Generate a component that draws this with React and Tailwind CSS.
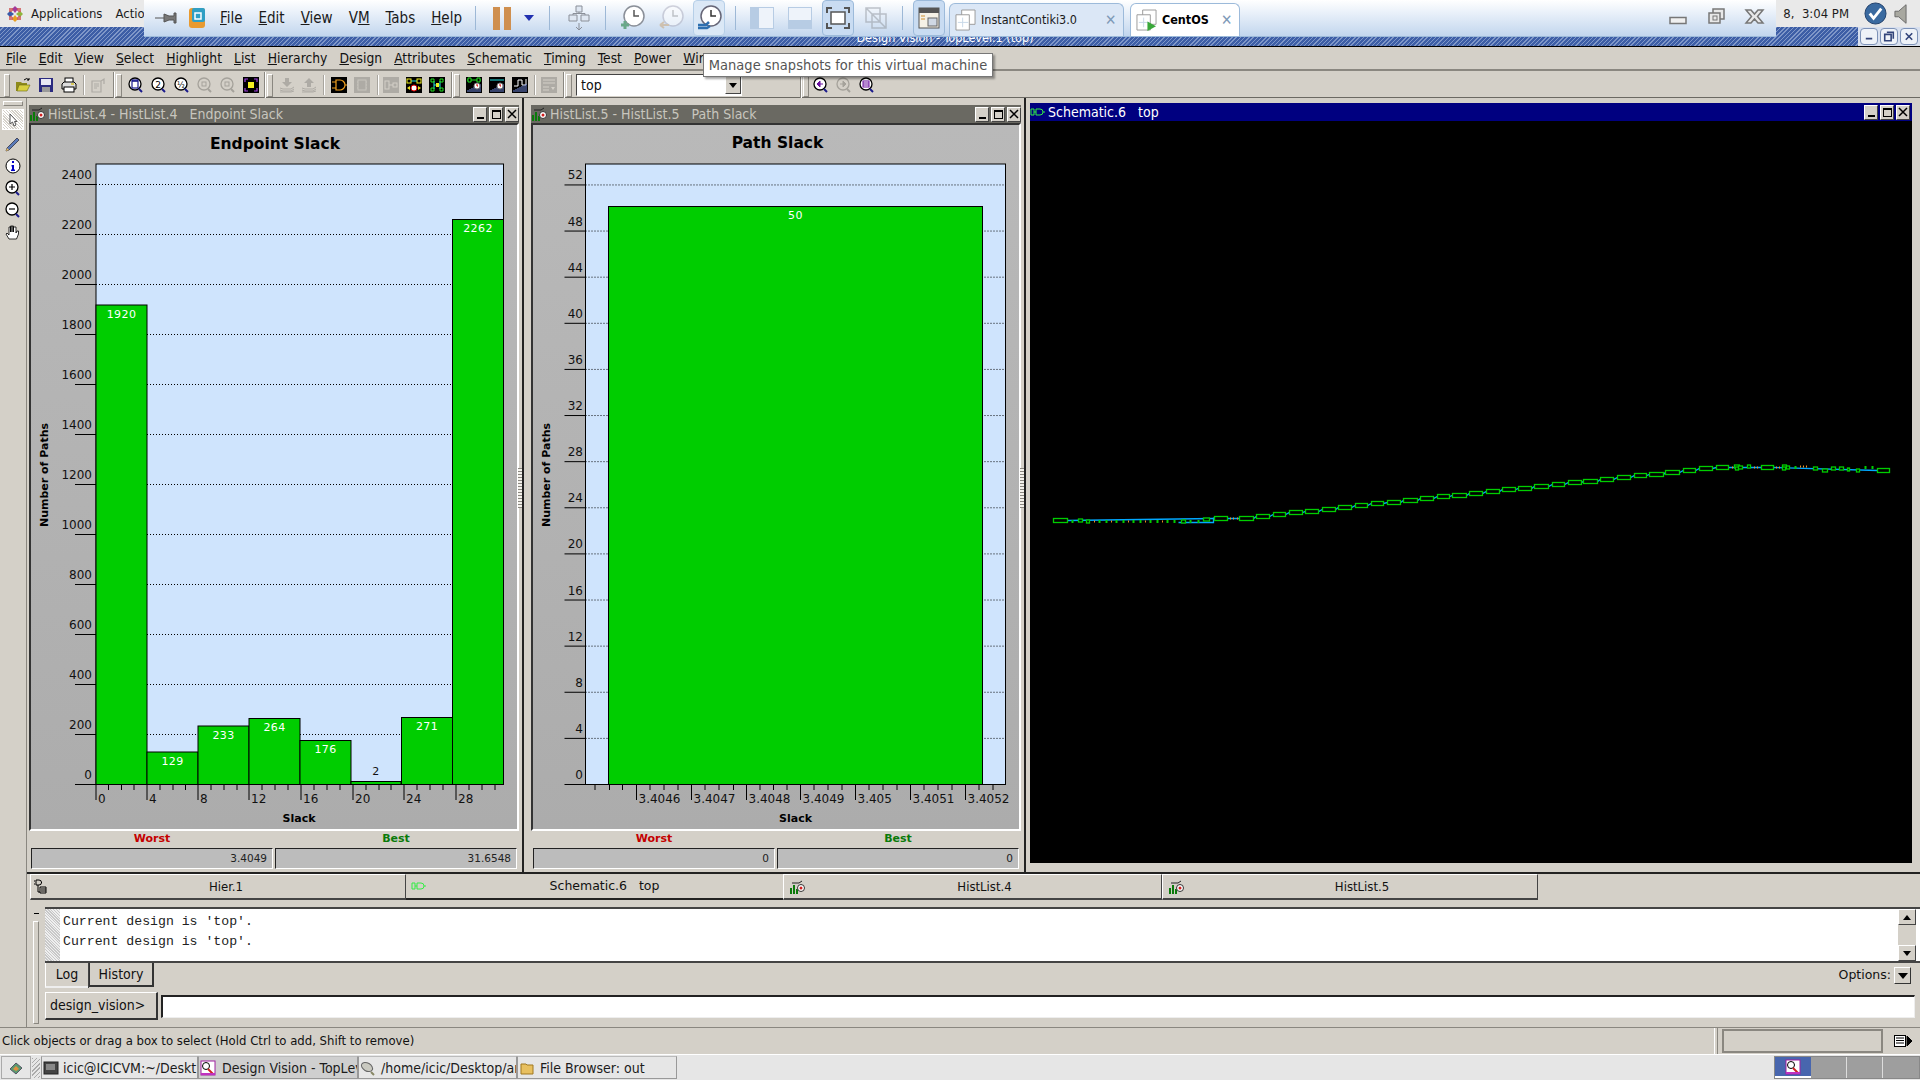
import React from "react";

const CHART_FONT = "'DejaVu Sans', sans-serif";

const menus = ["File", "Edit", "View", "Select", "Highlight", "List", "Hierarchy", "Design", "Attributes", "Schematic", "Timing", "Test", "Power", "Wir"];

const Ico = ({ children, className = "" }) => (
  <svg viewBox="0 0 16 16" className={`w-4 h-4 shrink-0 ${className}`}>{children}</svg>
);

const Grip = () => (
  <div className="w-[6px] h-[23px] shrink-0 border border-[#8a8780] border-t-white border-l-white bg-[#d4d0c8] mx-[1px]" />
);

const Sep = () => <div className="w-[2px] h-[20px] shrink-0 bg-[#a8a59e] border-r border-white" />;

const Band = () => <div className="w-[2px] h-[26px] shrink-0 bg-[#8a8780] border-r border-white" />;

const Lens = ({ children, muted }) => (
  <Ico>
    <circle cx="7" cy="7" r="6" fill={muted ? "none" : "#fff"} stroke={muted ? "#a5a29b" : "#000"} strokeWidth="1.3" />
    <path d="M11 12l3 3" stroke={muted ? "#a5a29b" : "#1a1a8c"} strokeWidth="2" />
    {children}
  </Ico>
);

const BlackBox = ({ children }) => (
  <Ico>
    <rect width="16" height="16" fill="#000" />
    {children}
  </Ico>
);

const GreyBox = ({ children }) => (
  <Ico>
    <rect width="16" height="16" fill="#aeaba5" />
    {children}
  </Ico>
);

const Bars = ({ color = "#6f86d8" }) => (
  <path d="M2 15v-2M4 15v-3M6 15v-4M8 15v-5M10 15v-6M12 15v-7M14 15v-8" stroke={color} strokeWidth="1" />
);

const Clock = () => (
  <g>
    <circle cx="11" cy="9" r="3" fill="#fff" stroke="#777" />
    <path d="M11 7v2h1" stroke="#d00" strokeWidth="1" fill="none" />
  </g>
);

function AppToolbar() {
  return (
    <div className="h-[27px] shrink-0 flex items-center pl-[3px] pt-[2px] bg-[#d4d0c8] border-b border-[#6b6963]">
      <Grip />
      <div className="flex items-center gap-[7px] ml-[4px]">
        <Ico>
          <path d="M1 5h5l1 1h5v2H5L3 14H1z" fill="#8d8a1c" />
          <path d="M4 8h11l-3 6H2z" fill="#d8d040" stroke="#6a6812" strokeWidth=".6" />
          <path d="M9 3q3-3 5 0M14 1v2h-2" stroke="#000" fill="none" />
        </Ico>
        <Ico>
          <rect x="1" y="1" width="14" height="14" fill="#2b2b80" />
          <rect x="3" y="2" width="10" height="6" fill="#e8e8f4" />
          <rect x="4" y="10" width="8" height="5" fill="#9a9a9a" />
        </Ico>
        <Ico>
          <rect x="4" y="1" width="8" height="5" fill="#fff" stroke="#000" />
          <path d="M1 7l2-2h10l2 2v5H1z" fill="#ddd" stroke="#000" />
          <rect x="3" y="10" width="10" height="5" fill="#fff" stroke="#000" />
          <path d="M10 7h3" stroke="#d8c020" strokeWidth="1.4" />
        </Ico>
      </div>
      <div className="ml-[6px]"><Sep /></div>
      <div className="ml-[5px]">
        <Ico>
          <path d="M2 4h9v11H2zM4 7h5M4 9h5M4 11h3M11 4l3-2v5" stroke="#aeaba5" fill="none" strokeWidth="1.2" />
        </Ico>
      </div>
      <div className="ml-[7px]"><Band /></div>
      <Grip />
      <div className="flex items-center gap-[7px] ml-[5px]">
        <Lens><rect x="4" y="3" width="6" height="8" fill="none" stroke="#1a1a8c" strokeWidth="1.2" /><path d="M4 4h6" stroke="#1a1a8c" strokeWidth="1.6" /></Lens>
        <Lens><text x="7" y="10.5" fontSize="9" textAnchor="middle" fontFamily={CHART_FONT}>2</text></Lens>
        <Lens><text x="7" y="10.5" fontSize="8" textAnchor="middle" fontFamily={CHART_FONT}>½</text></Lens>
        <Lens muted><rect x="5" y="5" width="4" height="4" fill="none" stroke="#a5a29b" /></Lens>
        <Lens muted><rect x="5" y="5" width="4" height="4" fill="none" stroke="#a5a29b" /></Lens>
        <BlackBox>
          <rect x="5" y="5" width="6" height="6" fill="#f4f020" />
          <path d="M2 5V2h3M11 2h3v3M14 11v3h-3M5 14H2v-3" stroke="#a040e0" fill="none" strokeWidth="1.2" />
        </BlackBox>
      </div>
      <div className="ml-[5px]"><Band /></div>
      <Grip />
      <div className="flex items-center gap-[6px] ml-[5px]">
        <Ico><path d="M6 1h4v4h3l-5 5-5-5h3z" fill="#aeaba5" /><path d="M1 11l3 1h8l3-2M1 13l3 1h8l3-2M1 15h11l3-1" stroke="#aeaba5" fill="none" /></Ico>
        <Ico><path d="M8 1l5 5h-3v4H6V6H3z" fill="#aeaba5" /><path d="M1 11l3 1h8l3-2M1 13l3 1h8l3-2M1 15h11l3-1" stroke="#aeaba5" fill="none" /></Ico>
      </div>
      <div className="ml-[6px]"><Sep /></div>
      <div className="flex items-center gap-[7px] ml-[6px]">
        <BlackBox><path d="M1 5h4M1 11h4M5 3h4a5 5 0 0 1 0 10H5zM14 8h2" stroke="#f0a020" fill="none" strokeWidth="1.2" /></BlackBox>
        <GreyBox><rect x="4" y="3" width="8" height="10" fill="none" stroke="#c8c5be" /><path d="M3 5h1M3 8h1M3 11h1M12 5h1M12 8h1M12 11h1" stroke="#c8c5be" /></GreyBox>
      </div>
      <div className="ml-[7px]"><Sep /></div>
      <div className="flex items-center gap-[7px] ml-[4px]">
        <GreyBox><rect x="2" y="4" width="4" height="8" fill="none" stroke="#d4d0c8" /><rect x="10" y="6" width="4" height="4" fill="none" stroke="#d4d0c8" /><path d="M6 8h4" stroke="#d4d0c8" /></GreyBox>
        <BlackBox>
          <path d="M1 4h14" stroke="#20e0e0" /><rect x="1" y="2" width="4" height="4" fill="#000" stroke="#f0f020" /><rect x="11" y="2" width="4" height="4" fill="#000" stroke="#f0f020" />
          <circle cx="8" cy="11" r="3" fill="#fff" stroke="#d00" /><path d="M1 11l3-2v4zM15 11l-3-2v4z" fill="#f0e020" />
        </BlackBox>
        <BlackBox>
          <path d="M5 4v8M5 8h6M11 4v8" stroke="#20e0e0" /><path d="M2 2h3v3H2zM2 11h3v3H2zM11 2h3v3h-3zM11 11h3v3h-3z" fill="none" stroke="#20e020" /><rect x="7" y="6" width="3" height="4" fill="#f0f020" />
        </BlackBox>
      </div>
      <div className="ml-[6px]"><Band /></div>
      <Grip />
      <div className="flex items-center gap-[7px] ml-[5px]">
        <BlackBox><path d="M1 3h14" stroke="#20e020" /><path d="M2 1h3v4H2zM11 1h3v4h-3z" fill="#000" stroke="#20e020" /><Bars /><Clock /></BlackBox>
        <BlackBox><path d="M1 3h14" stroke="#20e0e0" /><Bars /><Clock /></BlackBox>
        <BlackBox><path d="M2 9h4V3h4v5h4V2" stroke="#fff" fill="none" /><Bars /></BlackBox>
      </div>
      <div className="ml-[6px]"><Sep /></div>
      <div className="ml-[5px]">
        <GreyBox><path d="M2 3h12M2 6h12M2 10h6M2 13h6" stroke="#d4d0c8" /><path d="M10 10h4l-2 3z" fill="#d4d0c8" /></GreyBox>
      </div>
      <div className="ml-[6px]"><Band /></div>
      <Grip />
      <div className="ml-[3px] w-[166px] h-[22px] bg-white border border-[#444] border-r-white border-b-white flex items-center pl-1 text-[14px]">
        <span className="flex-1">top</span>
        <span className="w-[16px] h-[18px] bg-[#d4d0c8] border border-white border-r-[#444] border-b-[#444] flex items-center justify-center">
          <span className="w-0 h-0 border-x-[4px] border-x-transparent border-t-[5px] border-t-black" />
        </span>
      </div>
      <div className="ml-[58px]"><Band /></div>
      <Grip />
      <div className="flex items-center gap-[7px] ml-[3px]">
        <Lens><path d="M10 7H6M7 4L4 7l3 3z" stroke="#6a10a0" fill="#6a10a0" /></Lens>
        <Lens muted><path d="M4 7h4M7 4l3 3-3 3z" stroke="#a5a29b" fill="#a5a29b" /></Lens>
        <Lens><rect x="4" y="4" width="6" height="6" fill="none" stroke="#6a10a0" /><path d="M4 6h6M4 8h6" stroke="#6a10a0" /></Lens>
      </div>
    </div>
  );
}

function TitleButtons() {
  const cls = "w-[14px] h-[15px] bg-[#d4d0c8] border border-white border-r-[#444] border-b-[#444] flex items-center justify-center";
  return (
    <div className="flex gap-[2px]">
      <div className={cls}><span className="mt-[7px] w-[7px] h-[2px] bg-black" /></div>
      <div className={cls}><span className="w-[9px] h-[9px] border border-black border-t-2" /></div>
      <div className={cls}>
        <svg viewBox="0 0 10 10" className="w-[10px] h-[10px]"><path d="M1 1l8 8M9 1l-8 8" stroke="#000" strokeWidth="1.5" /></svg>
      </div>
    </div>
  );
}

const HistIcon = () => (
  <Ico>
    <path d="M1 15V9h2v6zM4 15V6h2v9zM7 15v-5h2v5z" fill="#0a7a0a" />
    <path d="M3 4h7l3-2" stroke="#222" fill="none" />
    <circle cx="12" cy="9" r="3.5" fill="#fff" stroke="#333" />
    <circle cx="12" cy="9" r="1.5" fill="#d02020" />
  </Ico>
);

const SchemIcon = () => (
  <svg viewBox="0 0 16 10" className="w-4 h-[10px] shrink-0">
    <path d="M1 2h3v6H1zM4 5h2M6 2h4a3 3 0 0 1 0 6H6zM13 5h2" fill="none" stroke="#33ee44" />
  </svg>
);

// histogram plot, drawn in page coordinates so the numbers read off the reference directly
function Plot({ box, title, titleX, titleY, plot, yTicks, xMajor, xMinor, xLabels, slackX, bars, yLabelX, pathsX }) {
  const base = 784.5;
  const [x0, x1] = plot;
  return (
    <svg
      viewBox={`${box[0]} 125 ${box[1] - box[0]} 704`}
      className="block shrink-0"
      style={{ width: box[1] - box[0], height: 704 }}
    >
      <defs>
        <linearGradient id={`g${box[0]}`} x1="0" y1="0" x2="0" y2="1">
          <stop offset="0" stopColor="#b9b9b9" />
          <stop offset="1" stopColor="#acacac" />
        </linearGradient>
      </defs>
      <rect x={box[0]} y="125" width={box[1] - box[0]} height="704" fill={`url(#g${box[0]})`} />
      <text x={titleX} y={titleY} textAnchor="middle" fontFamily={CHART_FONT} fontWeight="700" fontSize="15.5" fill="#000">{title}</text>
      <rect x={x0} y="164" width={x1 - x0} height={base - 164} fill="#cfe4fd" stroke="#000" />
      {yTicks.map(([label, y]) => (
        <g key={label}>
          {y < base && <line x1={x0} x2={x1} y1={y + 0.5} y2={y + 0.5} stroke="#000" strokeDasharray="1 2" />}
          <line x1={x0 - 21} x2={x0} y1={y + 0.5} y2={y + 0.5} stroke="#000" />
          <text x={yLabelX} y={y - 5} textAnchor="end" fontFamily={CHART_FONT} fontSize="12" fill="#111">{label}</text>
        </g>
      ))}
      <text
        transform={`translate(${pathsX} 475) rotate(-90)`}
        textAnchor="middle"
        fontFamily={CHART_FONT}
        fontWeight="700"
        fontSize="11"
        fill="#000"
      >
        Number of Paths
      </text>
      {bars.map((b) => (
        <g key={b.x}>
          <rect x={b.x} y={b.y} width={b.w} height={base - b.y} fill="#00cd00" stroke="#000" />
          <text
            x={b.x + b.w / 2}
            y={b.ly}
            textAnchor="middle"
            fontFamily={CHART_FONT}
            fontSize="11"
            letterSpacing=".4"
            fill={b.dark ? "#111" : "#fff"}
          >
            {b.label}
          </text>
        </g>
      ))}
      <line x1={x0} x2={x1} y1={base} y2={base} stroke="#000" />
      {xMinor.map((x) => <line key={x} x1={x} x2={x} y1={base} y2="790" stroke="#000" />)}
      {xMajor.map((x, i) => (
        <g key={x}>
          <line x1={x} x2={x} y1={base} y2="800" stroke="#000" />
          <text x={x + 2} y="803" fontFamily={CHART_FONT} fontSize="12" fill="#111">{xLabels[i]}</text>
        </g>
      ))}
      <text x={slackX} y="822" textAnchor="middle" fontFamily={CHART_FONT} fontWeight="700" fontSize="11" fill="#000">Slack</text>
    </svg>
  );
}

const endBars = [
  [96, 51, 1920, 305], [147, 51, 129, 752], [198, 51, 233, 726], [249, 51, 264, 718.5],
  [300, 51, 176, 740.5], [351, 50, 2, 781.5], [401.5, 51, 271, 717.5], [452.5, 51, 2262, 219.5],
].map(([x, w, v, y]) => ({
  x, w, y, label: v, dark: v === 2, ly: v === 2 ? 775 : y + 12.5,
}));

const pathBars = [{ x: 608.5, w: 374, y: 206.5, label: 50, ly: 219 }];

const endTicks = [2400, 2200, 2000, 1800, 1600, 1400, 1200, 1000, 800, 600, 400, 200, 0].map((v) => [v, 784 - v / 8 * 2]);
const pathTicks = [52, 48, 44, 40, 36, 32, 28, 24, 20, 16, 12, 8, 4, 0].map((v) => [v, 784 - v * 11.53]);

const endMajor = [96, 147, 198, 249, 301, 353, 404, 456];
const endMinor = [108.5, 121.5, 134, 160, 173, 185.5, 211, 224, 237, 262, 275, 288, 314, 327, 340, 366, 379, 391, 417, 430, 443, 469, 482, 495];
const pathMajor = [636.5, 691.5, 746.5, 800.5, 855.5, 910.5, 965.5];
const pathMinor = [595, 609.5, 622.5, 650, 664, 678, 705, 733.5, 719, 760, 773.5, 787, 814, 828, 842, 869, 883, 897, 924, 938, 952, 979, 993];

function HistWindow({ gap, titleText, chart, worst, best, topGap }) {
  return (
    <div className={`${gap} relative w-[496px] h-full shrink-0 flex flex-col bg-[#d4d0c8] border-r-2 border-r-[#222] pl-[1px]`}>
      <div className={`${topGap} w-[490px] h-[18px] shrink-0 bg-[#6a6962] flex items-center text-[#c8c6be] text-[14px] whitespace-pre`}>
        <HistIcon />
        <span className="flex-1 ml-[3px]">{titleText}</span>
        <TitleButtons />
      </div>
      <div className="w-[490px] border-2 border-[#333] border-r-white border-b-white overflow-hidden shrink-0">
        {chart}
      </div>
      <div className="ml-[2px] flex h-[17px] shrink-0 items-center font-['DejaVu_Sans',sans-serif] font-bold text-[11px]">
        <span className="w-[242px] text-center text-[#c40000]">Worst</span>
        <span className="ml-[2px] w-[242px] text-center text-[#0a7a0a]">Best</span>
      </div>
      <div className="ml-[2px] flex gap-[2px] h-[21px] shrink-0 font-['DejaVu_Sans',sans-serif] text-[10.5px] text-[#222]">
        <div className="w-[242px] bg-[#bcbcbc] border border-[#222] border-r-white border-b-white text-right pr-[5px] leading-[19px]">{worst}</div>
        <div className="w-[242px] bg-[#bcbcbc] border border-[#222] border-r-white border-b-white text-right pr-[5px] leading-[19px]">{best}</div>
      </div>
      {/* splitter handle */}
      <div className="absolute right-[0px] top-[370px] w-[4px] h-[40px] bg-[repeating-linear-gradient(0deg,#8a8780_0,#8a8780_1px,#f4f2ec_1px,#f4f2ec_3px)]" />
    </div>
  );
}

function SchematicWindow() {
  const mk = (ox) => (a, b, y) => [Math.round(ox + a / 3) + 0.5, Math.round(ox + b / 3) + 0.5, Math.round(440 + y / 3) + 0.5];
  const a = mk(1030);
  const b = mk(1450);
  const big = [
    a(70, 110, 240), a(553, 590, 233), a(628, 668, 233), a(677, 716, 227), a(728, 764, 223), a(777, 815, 217), a(824, 863, 212),
    a(875, 914, 207), a(923, 962, 202), a(975, 1012, 196), a(1022, 1060, 190), a(1071, 1109, 185), a(1120, 1160, 180),
    a(1170, 1208, 175), a(1220, 1257, 169),
    b(7, 47, 165), b(58, 95, 158), b(108, 147, 154), b(155, 194, 148), b(205, 243, 143), b(253, 293, 137), b(306, 341, 133),
    b(354, 392, 127), b(400, 440, 122), b(451, 488, 116), b(500, 539, 112), b(552, 587, 106), b(598, 638, 101), b(646, 687, 95),
    b(699, 734, 91), b(747, 785, 85), b(797, 833, 81), b(933, 968, 82), b(1282, 1317, 90),
  ];
  const small = [
    a(145, 155, 241), a(168, 178, 244), a(453, 464, 242), a(520, 538, 237),
    b(853, 866, 78), b(855, 863, 85), b(864, 875, 81), b(890, 899, 79), b(995, 1007, 78), b(996, 1005, 85), b(1007, 1016, 81),
    b(1088, 1100, 84), b(1116, 1132, 90), b(1142, 1155, 83), b(1166, 1178, 85), b(1190, 1198, 88), b(1217, 1226, 90),
  ];
  const ticks = [
    ...[125, 207, 228, 258, 279, 309, 330, 360, 381, 411, 432, 481, 503].map((x) => a(x, x, 244)),
    ...[1035, 1245, 1266].map((x) => b(x, x, 80)),
  ];
  const orange = [
    ...[193, 244, 295, 346, 397, 601, 610, 620].map((x) => a(x, x, x > 500 ? 233 : 243)),
    ...[845, 912, 922, 978, 988].map((x) => b(x, x, 81)),
    ...[1051, 1060, 1069].map((x) => b(x, x, 79)),
  ];
  const wire = big.map(([x1, x2, y]) => `${x1},${y} ${x2},${y}`).join(" ");
  return (
    <div className="flex-1 h-full flex flex-col bg-[#d4d0c8] pl-[4px] pr-[8px]">
      <div className="mt-[5px] h-[18px] shrink-0 bg-[#000080] flex items-center pr-[2px] text-white text-[14px] whitespace-pre">
        <SchemIcon />
        <span className="flex-1 ml-[2px]">Schematic.6   top</span>
        <TitleButtons />
      </div>
      <svg viewBox="1030 121 882 742" className="block w-[882px] h-[742px] bg-black shrink-0">
        <polyline points={wire} fill="none" stroke="#00a8ff" strokeWidth="1.3" />
        <path d="M1178.500 522.500h35v-5" fill="none" stroke="#00a8ff" strokeWidth="1.3" />
        {orange.map(([x, , y]) => <line key={`${x}-${y}`} x1={x} x2={x} y1={y - 1} y2={y + 1} stroke="#f09020" />)}
        {ticks.map(([x, , y]) => <rect key={`${x}-${y}`} x={x - 1} y={y - 1.5} width="2" height="3" fill="#00cd00" />)}
        {big.map(([x1, x2, y]) => <rect key={x1} x={x1} y={y - 2} width={x2 - x1} height="4" fill="#000" stroke="#00cd00" strokeWidth="1.3" />)}
        {small.map(([x1, x2, y]) => <rect key={`${x1}-${y}`} x={x1} y={y - 1.5} width={x2 - x1} height="3" fill="#000" stroke="#00cd00" strokeWidth="1.3" />)}
      </svg>
    </div>
  );
}

function DocTabs() {
  const raised = "h-[26px] shrink-0 relative flex items-center justify-center bg-[#d4d0c8] border border-white border-r-[#444] border-b-[#444] border-b-2 text-[13px]";
  return (
    <div className="h-[28px] shrink-0 flex items-start text-[#111] border-t-2 border-[#222] bg-[#d4d0c8]">
      <div className={`${raised} ml-[3px] w-[376px] pl-[16px]`}>
        <span className="absolute left-[3px]">
          <Ico><path d="M2 1h3a2 2 0 0 1 0 5H2zM7 3.5h1M1 2H0M1 5H0M4 6v7h2M6 8h6v6H6zM7 10h5M7 12h5" fill="none" stroke="#000" /></Ico>
        </span>
        Hier.1
      </div>
      <div className="w-[377px] h-[26px] shrink-0 relative flex items-center justify-center bg-[#d4d0c8] border-b-2 border-[#222] font-['DejaVu_Sans',sans-serif] text-[12.5px] whitespace-pre pl-[20px]">
        <span className="absolute left-[5px]"><SchemIcon /></span>
        Schematic.6   top
      </div>
      <div className={`${raised} w-[379px] pl-[24px]`}>
        <span className="absolute left-[5px]"><HistIcon /></span>
        HistList.4
      </div>
      <div className={`${raised} w-[376px] pl-[24px]`}>
        <span className="absolute left-[5px]"><HistIcon /></span>
        HistList.5
      </div>
    </div>
  );
}

function Console() {
  return (
    <div className="flex-1 min-h-0 flex bg-[#d4d0c8]">
      <div className="w-[18px] shrink-0 flex flex-col items-center pt-[13px]">
        <span className="w-[5px] h-[1px] bg-black" />
        <span className="mt-[7px] w-[6px] flex-1 mb-[3px] border border-[#8a8780] border-t-white border-l-white" />
      </div>
      <div className="flex-1 min-w-0 flex flex-col">
        <div className="h-[56px] shrink-0 flex bg-white border-t-2 border-b-2 border-t-[#444] border-b-[#444] mt-[7px]">
          <div className="w-[15px] shrink-0 bg-[#d8d8d8] bg-[repeating-linear-gradient(45deg,#c8c8c8_0,#c8c8c8_1px,#efefef_1px,#efefef_2px)]" />
          <div className="flex-1 pl-[3px] pt-[3px] font-['Liberation_Mono',monospace] text-[13.2px] text-[#222] leading-[20px]">
            <div>Current design is 'top'.</div>
            <div>Current design is 'top'.</div>
          </div>
          <div className="w-[18px] shrink-0 mr-[4px] flex flex-col justify-between bg-[#d4d0c8]">
            <span className="h-[16px] bg-[#d4d0c8] border border-white border-r-[#444] border-b-[#444] flex items-center justify-center">
              <span className="w-0 h-0 border-x-[4px] border-x-transparent border-b-[5px] border-b-black" />
            </span>
            <span className="h-[16px] bg-[#d4d0c8] border border-white border-r-[#444] border-b-[#444] flex items-center justify-center">
              <span className="w-0 h-0 border-x-[4px] border-x-transparent border-t-[5px] border-t-black" />
            </span>
          </div>
        </div>
        <div className="h-[26px] shrink-0 flex items-start text-[14px] text-[#111]">
          <div className="w-[43px] h-[25px] flex items-center justify-center border-l border-white border-b-2 border-b-[#eee] shadow-[1px_0_0_#444]">Log</div>
          <div className="ml-[1px] w-[65px] h-[24px] flex items-center justify-center border border-[#333] border-t-0 border-b-2 border-r-2">History</div>
          <div className="flex-1" />
          <span className="mt-[3px] mr-[3px] font-['DejaVu_Sans',sans-serif] text-[12.5px]">Options:</span>
          <span className="mt-[4px] mr-[9px] w-[17px] h-[17px] border border-white border-r-[#333] border-b-[#333] flex items-center justify-center">
            <span className="w-0 h-0 border-x-[5px] border-x-transparent border-t-[6px] border-t-black" />
          </span>
        </div>
        <div className="mt-[3px] h-[28px] shrink-0 flex items-center gap-[3px] pr-[5px]">
          <div className="w-[113px] h-[28px] flex items-center pl-[4px] border border-white border-r-[#333] border-b-[#333] border-b-2 border-r-2 text-[14px] text-[#111]">
            design_vision&gt;
          </div>
          <div className="flex-1 h-[23px] bg-white border border-[#222] border-t-2 border-l-2 border-r-[#eee] border-b-[#eee]" />
        </div>
      </div>
    </div>
  );
}

function LeftTools() {
  return (
    <div className="w-[27px] shrink-0 h-full bg-[#d4d0c8] border-r border-[#8a8780] flex flex-col items-center">
      <div className="mt-[3px] w-[20px] h-[5px] border border-[#8a8780] border-t-white border-l-white" />
      <div className="mt-[3px] w-[22px] h-[21px] flex items-center justify-center border border-white bg-[repeating-linear-gradient(45deg,#fff_0,#fff_1px,#d4d0c8_1px,#d4d0c8_2px)]">
        <svg viewBox="0 0 10 14" className="w-[10px] h-[14px]"><path d="M2 1v10l2.5-2 1.5 4 2-1-1.5-3.500H9z" fill="#fff" stroke="#555" /></svg>
      </div>
      <div className="mt-[6px] flex flex-col items-center gap-[6px]">
        <Ico><path d="M1 15l3-1 10-10-2-2L2 12z" fill="#5a7ab8" stroke="#223" strokeWidth=".7" /><path d="M1 15l1-3 2 2z" fill="#f0c060" /></Ico>
        <Ico><circle cx="8" cy="8" r="7" fill="#fff" stroke="#000" /><path d="M7 3h2v2H7zM6.500 7H9v4.500h1V13H6v-1.500h1V8.500h-.5z" fill="#0000c8" /></Ico>
        <Lens><path d="M4 7h6M7 4v6" stroke="#000" strokeWidth="1.2" /></Lens>
        <Lens><path d="M4 7h6" stroke="#000" strokeWidth="1.2" /></Lens>
        <Ico><path d="M4 15l-3-5 1-1 2 2V3h1.500v5V2h1.500v6V2h1.500v6V3H11v6l1-2h1.500v3l-2 5z" fill="#fff" stroke="#000" strokeWidth=".8" /></Ico>
      </div>
    </div>
  );
}

const TabPage = ({ play }) => (
  <svg viewBox="0 0 22 24" className="ml-[5px] w-[21px] h-[23px] shrink-0">
    <path d="M7 1h14v15H7z" fill="#fff" stroke="#999" />
    <path d="M1 6h14v16H1z" fill="#fff" stroke="#999" />
    <path d="M8 9v10M3 14h11" stroke="#c8d8e8" />
    {play && <path d="M12 13l9 5-9 5z" fill="#3aa83a" />}
  </svg>
);

function VmToolbar() {
  const btn = "flex items-center justify-center rounded-sm";
  return (
    <div className="absolute left-[144px] top-0 w-[1632px] h-[37px] bg-gradient-to-b from-white to-[#c2d6ee] border-b border-[#9cbada] flex items-center text-[#1a1a1a] text-[15px] z-10">
      <svg viewBox="0 0 22 14" className="ml-[11px] w-[22px] h-[14px] shrink-0"><path d="M0 7h9M9 3l5 2h5V2h2v10h-2V9h-5l-5 2z" fill="#777" stroke="#555" /></svg>
      <svg viewBox="0 0 18 22" className="ml-[11px] w-[18px] h-[22px] shrink-0">
        <rect x="1" y="1" width="16" height="20" rx="3" fill="#e89a30" />
        <rect x="4" y="1" width="13" height="14" rx="2" fill="#2f9fc4" />
        <rect x="7" y="6" width="6" height="6" fill="none" stroke="#fff" strokeWidth="1.5" />
      </svg>
      <div className="ml-[14px] flex gap-[16px] font-['DejaVu_Sans_Condensed','DejaVu_Sans',sans-serif]">
        {["File", "Edit", "View", "VM", "Tabs", "Help"].map((m) => (
          <span key={m}>
            {m === "VM" ? <>V<u>M</u></> : <><u>{m[0]}</u>{m.slice(1)}</>}
          </span>
        ))}
      </div>
      <div className="ml-[13px] w-px h-[24px] bg-[#9db8d6]" />
      <div className="ml-[17px] flex gap-[4px]">
        <span className="w-[7px] h-[23px] bg-[#cf8f4f]" />
        <span className="w-[7px] h-[23px] bg-[#cf8f4f]" />
      </div>
      <span className="ml-[13px] w-0 h-0 border-x-[5px] border-x-transparent border-t-[6px] border-t-[#2030b0]" />
      <div className="ml-[15px] w-px h-[24px] bg-[#9db8d6]" />
      <svg viewBox="0 0 22 26" className="ml-[18px] w-[22px] h-[26px] shrink-0">
        <path d="M8 1h6v6H8zM1 10h8v6H1zM13 10h8v6h-8z" fill="#dfe7f2" stroke="#8a8f98" />
        <path d="M11 7v2M5 10V8.500h12V10M11 18v7M8 22l3 3 3-3" fill="none" stroke="#8a8f98" />
      </svg>
      <div className="ml-[15px] w-px h-[24px] bg-[#9db8d6]" />
      <svg viewBox="0 0 26 26" className="ml-[13px] w-[26px] h-[26px] shrink-0">
        <circle cx="15" cy="11" r="10" fill="#fff" stroke="#8a8f98" strokeWidth="1.5" />
        <path d="M15 5v6h5" stroke="#555" strokeWidth="1.5" fill="none" />
        <path d="M2 20h8M6 16v8" stroke="#6aa88a" strokeWidth="3" />
      </svg>
      <svg viewBox="0 0 26 26" className="ml-[13px] w-[26px] h-[26px] shrink-0 opacity-50">
        <circle cx="15" cy="11" r="10" fill="#fff" stroke="#aab" strokeWidth="1.5" />
        <path d="M15 5v6h5" stroke="#999" strokeWidth="1.5" fill="none" />
        <path d="M2 20h9M2 20l4-3M2 20l4 3" stroke="#c8a070" strokeWidth="2" fill="none" />
      </svg>
      <div className={`${btn} ml-[9px] w-[32px] h-[36px] bg-[#dbe8f6] border border-[#b6cfe8]`}>
        <svg viewBox="0 0 26 26" className="w-[26px] h-[26px]">
          <circle cx="15" cy="11" r="10" fill="#fff" stroke="#667" strokeWidth="1.5" />
          <path d="M15 5v6h5" stroke="#333" strokeWidth="1.5" fill="none" />
          <path d="M2 20h8l3-3M2 23h9l3-2" stroke="#2d6fb0" strokeWidth="2.500" fill="none" />
        </svg>
      </div>
      <div className="ml-[10px] w-px h-[24px] bg-[#9db8d6]" />
      <div className="ml-[14px] w-[24px] h-[22px] flex shrink-0">
        <span className="w-[8px] bg-[#b7cce4]" />
        <span className="flex-1 bg-[#eef3fa] border border-[#b7cce4]" />
      </div>
      <div className="ml-[14px] w-[24px] h-[22px] flex flex-col shrink-0">
        <span className="flex-1 bg-[#eef3fa] border border-[#b7cce4]" />
        <span className="h-[8px] bg-[#b7cce4]" />
      </div>
      <div className={`${btn} ml-[10px] w-[32px] h-[36px] bg-[#c9dcf2] border border-[#9cbada]`}>
        <svg viewBox="0 0 24 22" className="w-[24px] h-[22px]">
          <rect x="5" y="5" width="14" height="12" fill="#fff" stroke="#555" strokeWidth="1.5" />
          <path d="M1 6V1h5M18 1h5v5M23 16v5h-5M6 21H1v-5" fill="none" stroke="#555" strokeWidth="2" />
        </svg>
      </div>
      <svg viewBox="0 0 24 24" className="ml-[10px] w-[24px] h-[24px] shrink-0 opacity-60">
        <path d="M2 2h14v14H2zM8 8h14v14H8zM2 2l20 20" fill="none" stroke="#9aa0a8" strokeWidth="1.5" />
      </svg>
      <div className="ml-[14px] w-px h-[24px] bg-[#9db8d6]" />
      <div className={`${btn} ml-[10px] w-[32px] h-[36px] bg-[#c9dcf2] border border-[#9cbada]`}>
        <svg viewBox="0 0 24 24" className="w-[24px] h-[24px]">
          <rect x="2" y="2" width="20" height="20" fill="#f5f1e6" stroke="#555" />
          <rect x="2" y="2" width="20" height="5" fill="#555" />
          <rect x="11" y="12" width="9" height="8" fill="#cfd8e4" stroke="#666" />
          <path d="M4 10h4M4 13h4" stroke="#d09030" />
        </svg>
      </div>
      <div className="ml-[4px] self-end w-[175px] h-[33px] rounded-t-md bg-[#dbe7f6] border border-b-0 border-[#9cbada] flex items-center shrink-0">
        <TabPage />
        <span className="ml-[5px] text-[12.5px]">InstantContiki3.0</span>
        <span className="ml-[28px] text-[#7f9ab8] text-[15px] font-bold">✕</span>
      </div>
      <div className="ml-[6px] self-end w-[110px] h-[33px] rounded-t-md bg-white border border-b-0 border-[#9cbada] flex items-center shrink-0">
        <TabPage play />
        <span className="ml-[5px] text-[12.5px] font-bold text-black">CentOS</span>
        <span className="ml-[12px] text-[#7f9ab8] text-[15px] font-bold">✕</span>
      </div>
      <svg viewBox="0 0 100 20" className="ml-[428px] w-[100px] h-[20px] shrink-0">
        <rect x="2" y="9.500" width="16" height="6" fill="#f0f0f0" stroke="#777" strokeWidth="1.500" />
        <path d="M41 5h11v10H41zM45 5V1h11v10h-4" fill="#e8e8e8" stroke="#777" strokeWidth="1.500" />
        <rect x="45" y="8" width="4" height="4" fill="none" stroke="#777" />
        <path d="M78 2h5l3.500 4L90 2h5l-5.500 6.500L95 15h-5l-3.500-4L83 15h-5l5.500-6.500z" fill="#e8e8e8" stroke="#777" strokeWidth="1.500" />
      </svg>
    </div>
  );
}

function Taskbar() {
  const item = "h-[23px] shrink-0 flex items-center border border-[#999] border-t-[#bbb] pl-[1px] pt-[1px] text-[14px] text-[#1c1c1c] overflow-hidden whitespace-nowrap";
  return (
    <div className="h-[25px] shrink-0 bg-[#e6e6e6] flex items-center">
      <div className="w-[30px] h-[23px] ml-[1px] flex items-center justify-center border border-[#aaa]">
        <Ico><path d="M2 9l6-6 6 5-6 6z" fill="#5a9a70" stroke="#556" /><path d="M5 9l3-3 3 3-3 2z" fill="#e09040" /></Ico>
      </div>
      <div className="w-[8px] ml-[1px] h-[20px] bg-[repeating-linear-gradient(135deg,#aaa_0,#aaa_1px,#e6e6e6_1px,#e6e6e6_3px)] mr-[1px]" />
      <div className={`${item} w-[157px] gap-[4px]`}>
        <Ico><rect x="1" y="2" width="14" height="12" fill="#444" stroke="#222" /><rect x="3" y="4" width="9" height="6" fill="#888" /></Ico>
        icic@ICICVM:~/Deskt
      </div>
      <div className={`${item} w-[160px] gap-[6px] bg-[#cfcfcf]`}>
        <Ico><rect x="1" y="1" width="14" height="14" fill="#fff" stroke="#a020a0" /><circle cx="6" cy="6" r="3.500" fill="none" stroke="#000" /><path d="M8 9l5 5" stroke="#d02020" strokeWidth="2" /><rect x="1" y="13" width="14" height="2" fill="#c030c0" /></Ico>
        Design Vision - TopLev
      </div>
      <div className={`${item} w-[159px] gap-[5px]`}>
        <Ico><ellipse cx="7" cy="7" rx="6" ry="4" fill="#c9c9c0" stroke="#666" transform="rotate(30 7 7)" /><path d="M11 12l3 3" stroke="#886" strokeWidth="2" /></Ico>
        /home/icic/Desktop/arr
      </div>
      <div className={`${item} w-[160px] gap-[5px]`}>
        <Ico><path d="M2 4h5l1 1h6v9H2z" fill="#e8c060" stroke="#a07820" /></Ico>
        File Browser: out
      </div>
      <div className="flex-1" />
      <div className="w-[146px] h-[23px] flex border border-[#888]">
        <div className="w-[36px] bg-[#4866ae] flex items-center justify-center border-b-2 border-white">
          <Ico><rect x="1" y="1" width="14" height="14" fill="#fff" stroke="#a020a0" /><circle cx="6" cy="6" r="3.500" fill="none" stroke="#000" /><path d="M8 9l5 5" stroke="#d02020" strokeWidth="2" /><rect x="1" y="13" width="14" height="2" fill="#c030c0" /></Ico>
        </div>
        <div className="w-[36px] bg-[#9e9e9e] border-r border-[#ddd]" />
        <div className="w-[36px] bg-[#9e9e9e] border-r border-[#ddd]" />
        <div className="flex-1 bg-[#9e9e9e]" />
      </div>
    </div>
  );
}

export default function App() {
  return (
    <div className="relative w-[1920px] h-[1080px] overflow-hidden flex flex-col bg-[#d4d0c8] text-[#111] font-['DejaVu_Sans_Condensed','DejaVu_Sans',sans-serif]">
      {/* desktop panel */}
      <div className="h-[27px] shrink-0 bg-[#e9e9e9] flex items-center text-[13px] text-[#1c1c1c]">
        <svg viewBox="0 0 18 18" className="ml-[6px] w-[18px] h-[18px] shrink-0">
          <path d="M9 1l3 3-3 4-3-4z" fill="#a23b9a" /><path d="M17 9l-3 3-4-3 4-3z" fill="#8fb43c" /><path d="M9 17l-3-3 3-4 3 4z" fill="#e8a020" /><path d="M1 9l3-3 4 3-4 3z" fill="#3a5aa8" />
          <path d="M3 3h4v3H6v1H3zM15 3v4h-3V6h-1V3zM15 15h-4v-3h1v-1h3zM3 15v-4h3v1h1v3z" fill="#c44" opacity=".7" />
        </svg>
        <span className="ml-[7px]">Applications</span>
        <span className="ml-[13px]">Actions</span>
        <div className="flex-1" />
        <span className="text-[13px] whitespace-pre mr-[15px]">8,  3:04 PM</span>
        <svg viewBox="0 0 24 24" className="w-[23px] h-[23px] mr-[7px] shrink-0">
          <circle cx="12" cy="12" r="11" fill="#3a6aa0" stroke="#1f3f6a" />
          <path d="M6 12l4 5 8-10" stroke="#fff" strokeWidth="3" fill="none" />
        </svg>
        <svg viewBox="0 0 14 22" className="w-[13px] h-[22px] mr-[13px] shrink-0">
          <path d="M1 8h4l8-7v20l-8-7H1z" fill="#a8a8a0" stroke="#666" />
        </svg>
      </div>

      {/* app window title */}
      <div className="h-[20px] shrink-0 relative flex items-center justify-center bg-[repeating-linear-gradient(135deg,#3d5ea6_0,#3d5ea6_2px,#7f97c8_2px,#7f97c8_3px)] border-b border-black">
        <span className="relative top-[2px] ml-[-30px] text-white text-[12.5px]">Design Vision - TopLevel.1 (top)</span>
        <div className="absolute right-0 top-0 h-full w-[62px] bg-[#d8e0ef] flex items-center justify-center gap-[2px]">
          {["M4 9h6", "M5 3h6v6M3 5h6v6H3z", "M4 4l6 6M10 4l-6 6"].map((d) => (
            <svg key={d} viewBox="0 0 14 14" className="w-[18px] h-[17px] bg-[#eef2f8] border border-[#7e93b8] rounded-sm">
              <path d={d} stroke="#33457a" strokeWidth="1.500" fill="none" />
            </svg>
          ))}
        </div>
      </div>

      {/* menu bar */}
      <div className="h-[24px] shrink-0 flex items-center text-[13.75px] border-b-2 border-b-[#8a8780]">
        {menus.map((m) => (
          <span key={m} className="px-[6px]"><u>{m[0]}</u>{m.slice(1)}</span>
        ))}
      </div>

      <AppToolbar />

      {/* main area */}
      <div className="flex-1 min-h-0 flex">
        <LeftTools />
        <div className="flex-1 min-w-0 flex flex-col">
          <div className="h-[774px] shrink-0 flex bg-[#d4d0c8] pl-[1px]">
            <HistWindow
              gap=""
              topGap="mt-[7px]"
              titleText="HistList.4 - HistList.4   Endpoint Slack"
              worst="3.4049"
              best="31.6548"
              chart={
                <Plot
                  box={[31, 517]}
                  title="Endpoint Slack"
                  titleX={275}
                  titleY={149}
                  plot={[96, 503.5]}
                  yTicks={endTicks}
                  xMajor={endMajor}
                  xMinor={endMinor}
                  xLabels={[0, 4, 8, 12, 16, 20, 24, 28]}
                  slackX={299}
                  bars={endBars}
                  yLabelX={92}
                  pathsX={48}
                />
              }
            />
            <HistWindow
              gap="ml-[6px]"
              topGap="mt-[7px]"
              titleText="HistList.5 - HistList.5   Path Slack"
              worst="0"
              best="0"
              chart={
                <Plot
                  box={[533, 1019]}
                  title="Path Slack"
                  titleX={777.5}
                  titleY={148}
                  plot={[585.5, 1005.5]}
                  yTicks={pathTicks}
                  xMajor={pathMajor}
                  xMinor={pathMinor}
                  xLabels={["3.4046", "3.4047", "3.4048", "3.4049", "3.405", "3.4051", "3.4052"]}
                  slackX={795.5}
                  bars={pathBars}
                  yLabelX={583}
                  pathsX={550}
                />
              }
            />
            <SchematicWindow />
          </div>
          <DocTabs />
          <Console />
        </div>
      </div>

      {/* status bar */}
      <div className="h-[28px] shrink-0 flex items-center border-t border-[#8a8780] border-b border-b-white text-[13px] text-[#111] pl-[2px]">
        <span className="flex-1">Click objects or drag a box to select (Hold Ctrl to add, Shift to remove)</span>
        <div className="w-px h-full bg-white mr-[2px]" />
        <div className="w-[3px] h-full border-l border-[#8a8780]" />
        <div className="w-[161px] h-[24px] ml-[2px] border-2 border-[#8a8780]" />
        <svg viewBox="0 0 18 12" className="ml-[11px] mr-[8px] w-[18px] h-[12px] shrink-0">
          <rect x=".5" y=".5" width="11" height="11" fill="#fff" stroke="#000" />
          <path d="M2 3h8M2 5.500h8M2 8h8M13 1l5 5-5 5z" stroke="#000" />
        </svg>
      </div>

      <Taskbar />

      <VmToolbar />

      {/* tooltip hovering the snapshot button */}
      <div className="absolute left-[703px] top-[53px] w-[290px] h-[24px] pt-[2px] bg-white border border-[#777] shadow-[2px_2px_2px_rgba(0,0,0,0.35)] z-20 flex items-center justify-center text-[14.500px] text-[#555] whitespace-nowrap">
        Manage snapshots for this virtual machine
      </div>
    </div>
  );
}
